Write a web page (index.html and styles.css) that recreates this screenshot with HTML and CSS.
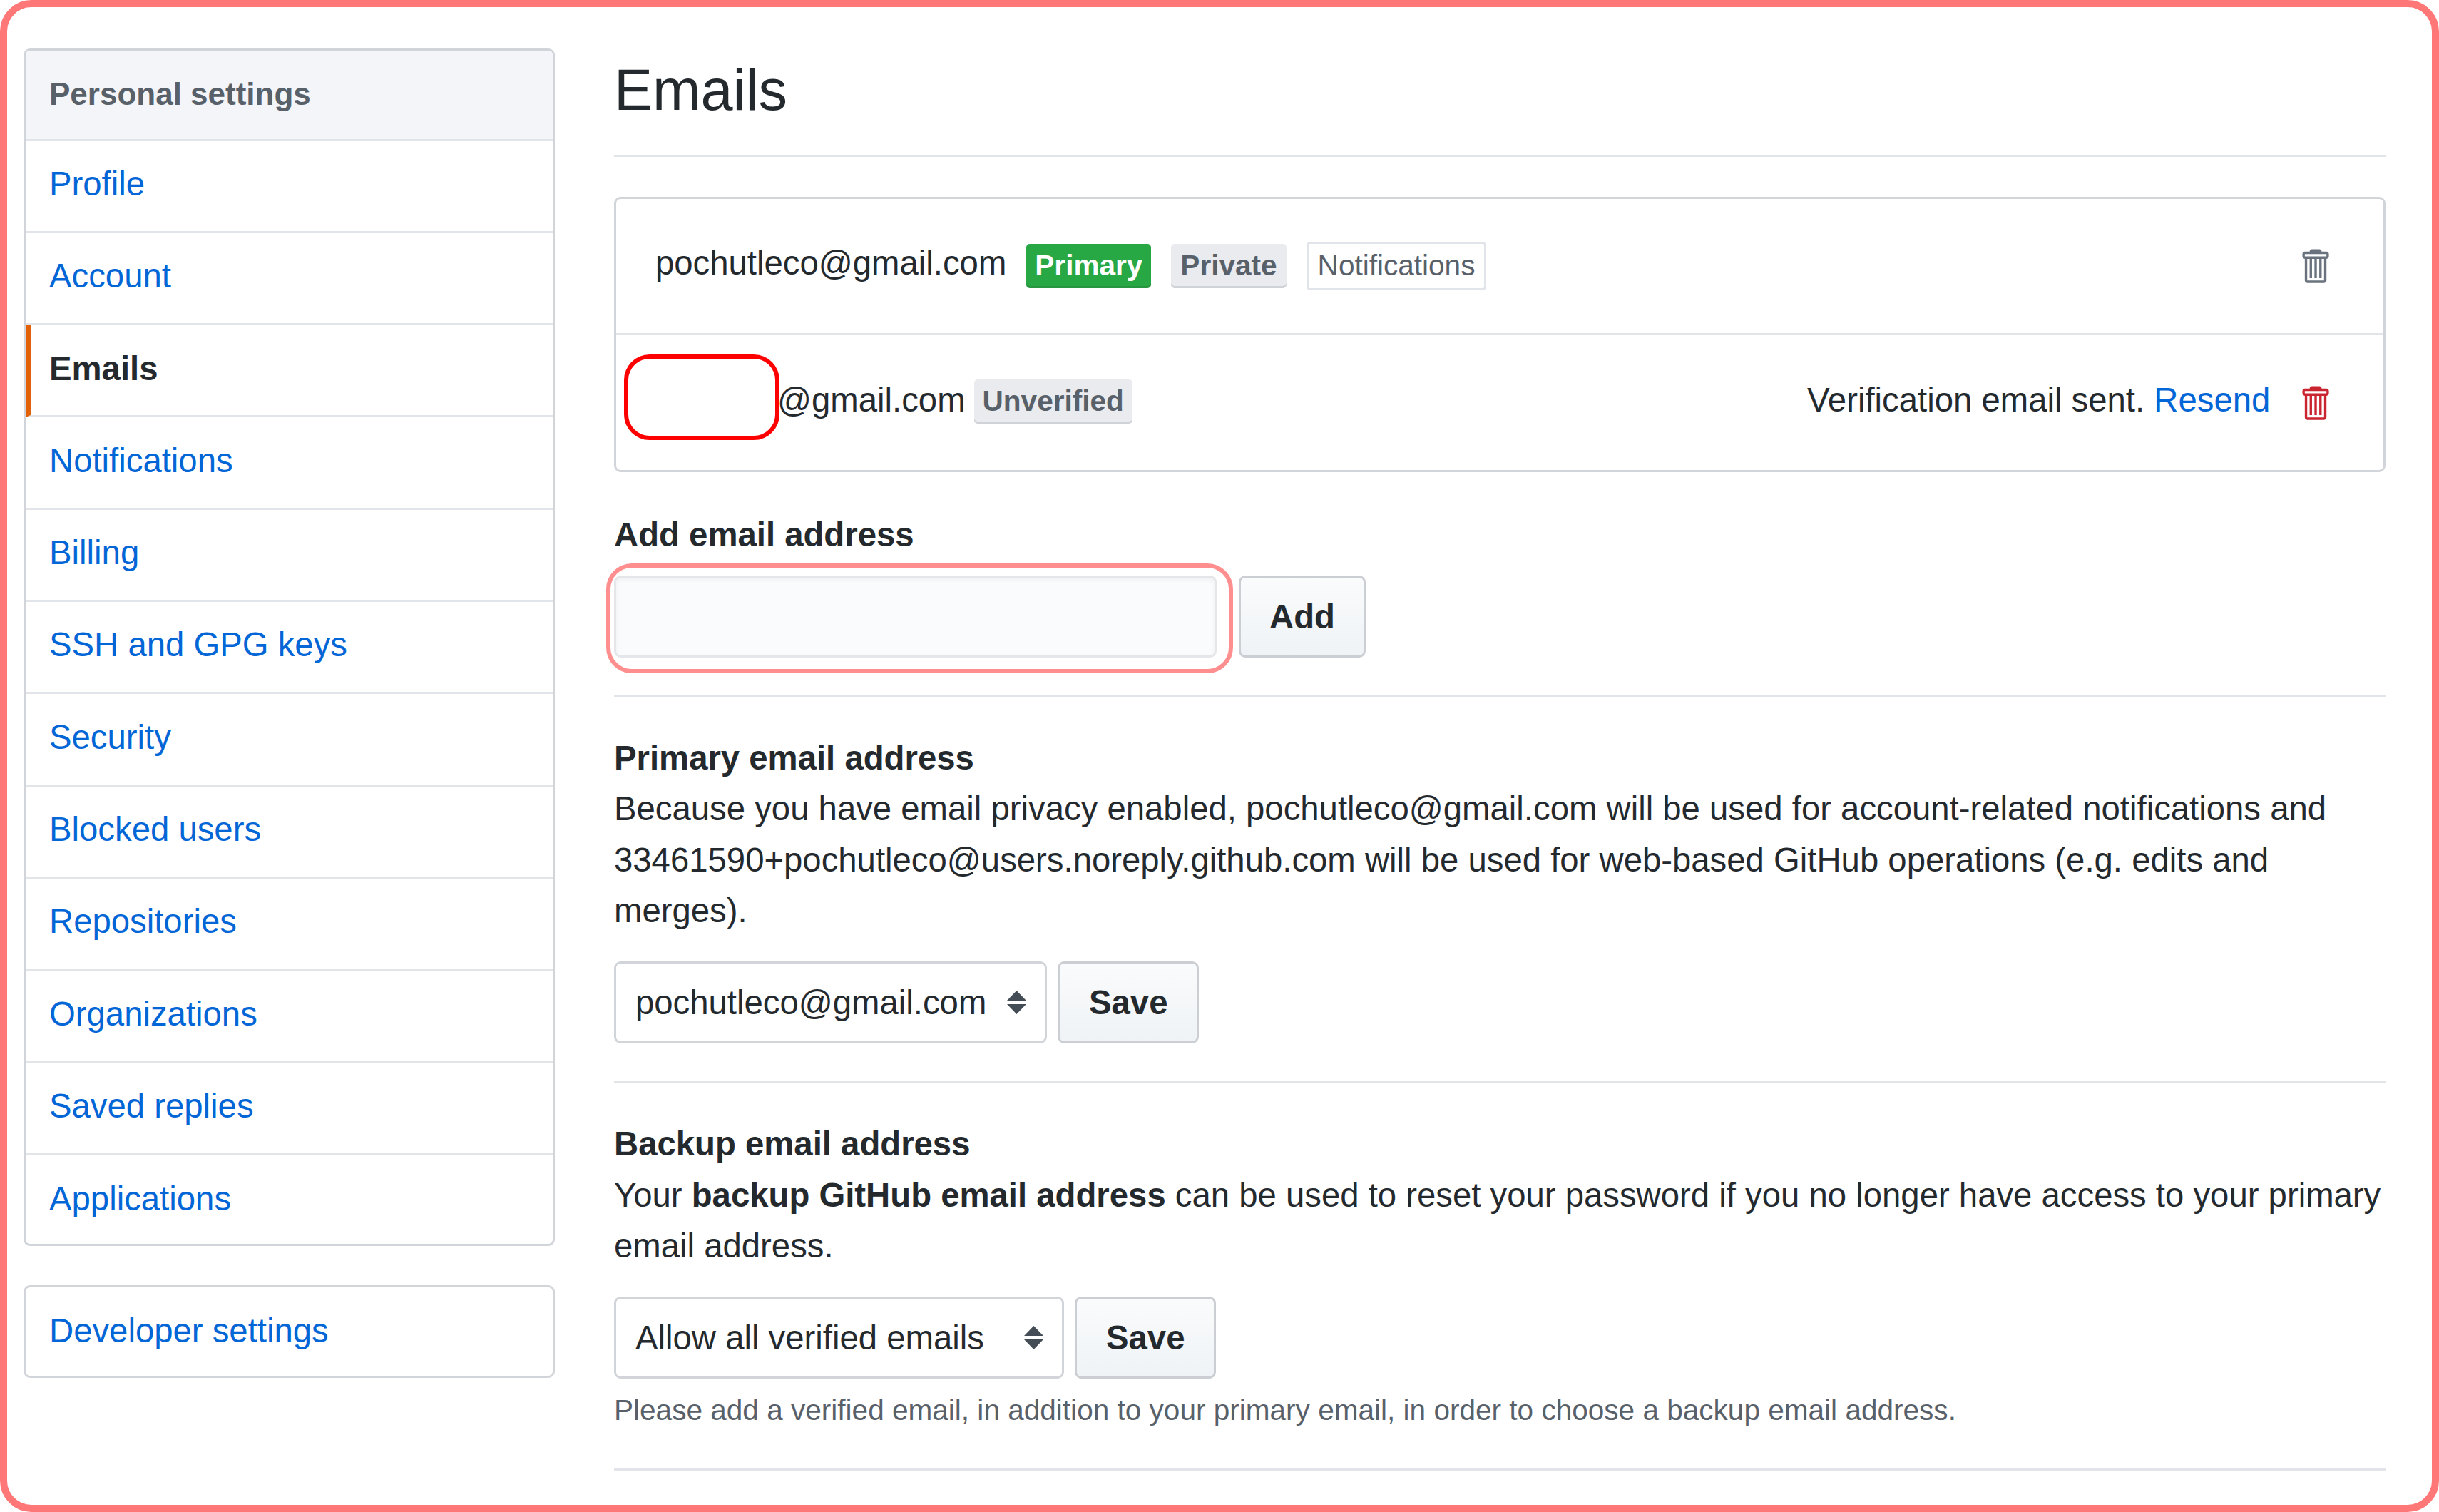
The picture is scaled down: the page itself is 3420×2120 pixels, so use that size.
FILE: index.html
```html
<!DOCTYPE html>
<html>

<head lang="en">
    <meta charset="UTF-8">
    <title>Emails</title>
    <link rel="stylesheet" href="styles.css">
</head>

<body>
    <div class="frame">
        <div class="side">
            <div class="menu">
                <div class="menu_head">Personal settings</div>
                <a class="menu_item" href="javascript:">Profile</a>
                <a class="menu_item" href="javascript:">Account</a>
                <a class="menu_item menu_current" href="javascript:">Emails</a>
                <a class="menu_item" href="javascript:">Notifications</a>
                <a class="menu_item" href="javascript:">Billing</a>
                <a class="menu_item" href="javascript:">SSH and GPG keys</a>
                <a class="menu_item" href="javascript:">Security</a>
                <a class="menu_item" href="javascript:">Blocked users</a>
                <a class="menu_item" href="javascript:">Repositories</a>
                <a class="menu_item" href="javascript:">Organizations</a>
                <a class="menu_item" href="javascript:">Saved replies</a>
                <a class="menu_item" href="javascript:">Applications</a>
            </div>
            <div class="menu menu_dev">
                <a class="menu_item" href="javascript:">Developer settings</a>
            </div>
        </div>

        <div class="main">
            <h1 class="title">Emails</h1>

            <div class="emails">
                <div class="email_row">
                    <span class="address">pochutleco@gmail.com</span>
                    <span class="label label_green">Primary</span>
                    <span class="label label_gray label_private">Private</span>
                    <span class="label label_line">Notifications</span>
                    <span class="row_right">
                        <svg class="trash" viewBox="0 0 12 16">
                            <path d="M11 2H9c0-.55-.45-1-1-1H5c-.55 0-1 .45-1 1H2c-.55 0-1 .45-1 1v1c0 .55.45 1 1 1v9c0 .55.45 1 1 1h7c.55 0 1-.45 1-1V5c.55 0 1-.45 1-1V3c0-.55-.45-1-1-1zm-1 12H3V5h1v8h1V5h1v8h1V5h1v8h1V5h1v9zm1-10H2V3h9v1z"></path>
                        </svg>
                    </span>
                </div>
                <div class="email_row email_second">
                    <span class="redact"></span>
                    <span class="address address_cut">@gmail.com</span>
                    <span class="label label_gray label_unverified">Unverified</span>
                    <span class="row_right">
                        <span class="sent">Verification email sent. <a href="javascript:">Resend</a></span>
                        <svg class="trash trash_red" viewBox="0 0 12 16">
                            <path d="M11 2H9c0-.55-.45-1-1-1H5c-.55 0-1 .45-1 1H2c-.55 0-1 .45-1 1v1c0 .55.45 1 1 1v9c0 .55.45 1 1 1h7c.55 0 1-.45 1-1V5c.55 0 1-.45 1-1V3c0-.55-.45-1-1-1zm-1 12H3V5h1v8h1V5h1v8h1V5h1v8h1V5h1v9zm1-10H2V3h9v1z"></path>
                        </svg>
                    </span>
                </div>
            </div>

            <div class="add_label">Add email address</div>
            <div class="add_row">
                <input class="add_input" type="text">
                <span class="add_mark"></span>
                <button class="btn btn_add">Add</button>
            </div>

            <div class="block block_primary">
                <div class="block_title">Primary email address</div>
                <p class="block_text">Because you have email privacy enabled, pochutleco@gmail.com will be used for account-related notifications and 33461590+pochutleco@users.noreply.github.com will be used for web-based GitHub operations (e.g. edits and merges).</p>
                <div class="pick_row">
                    <div class="pick pick_one">
                        <span>pochutleco@gmail.com</span>
                        <svg class="arrows" viewBox="0 0 27 33"><path d="M13.5 0L27 14H0zM13.5 33L0 19h27z"></path></svg>
                    </div>
                    <button class="btn">Save</button>
                </div>
            </div>

            <div class="block block_backup">
                <div class="block_title">Backup email address</div>
                <p class="block_text">Your <b>backup GitHub email address</b> can be used to reset your password if you no longer have access to your primary email address.</p>
                <div class="pick_row">
                    <div class="pick pick_two">
                        <span>Allow all verified emails</span>
                        <svg class="arrows" viewBox="0 0 27 33"><path d="M13.5 0L27 14H0zM13.5 33L0 19h27z"></path></svg>
                    </div>
                    <button class="btn">Save</button>
                </div>
                <p class="hint">Please add a verified email, in addition to your primary email, in order to choose a backup email address.</p>
            </div>
        </div>
    </div>
</body>

</html>
```

FILE: styles.css
```css
* {
    margin: 0;
    padding: 0;
    box-sizing: border-box;
}

html,
body {
    background: #fff;
}

body {
    width: 3420px;
    height: 2120px;
    overflow: hidden;
    font-family: "Liberation Sans", Arial, sans-serif;
    font-size: 47.3px;
    line-height: 71.4px;
    color: #24292e;
}

a {
    color: #0366d6;
    text-decoration: none;
}

.frame {
    width: 3420px;
    height: 2120px;
    border: 10px solid #ff7777;
    border-radius: 44px;
    padding: 58px 65px 0 23px;
    display: flex;
    gap: 83px;
}

/* left menu */
.side {
    width: 745px;
    flex-shrink: 0;
}

.menu {
    border: 3px solid #d1d5da;
    border-radius: 9px;
    overflow: hidden;
}

.menu_dev {
    margin-top: 55px;
}

.menu_head {
    height: 126.5px;
    padding: 0 0 3px 33px;
    display: flex;
    align-items: center;
    background: #f3f5f8;
    border-bottom: 3px solid #e1e4e8;
    font-size: 44px;
    font-weight: bold;
    color: #586069;
}

.menu_item {
    display: flex;
    align-items: center;
    height: 129.3px;
    padding: 0 0 6px 33px;
    border-bottom: 3px solid #e1e4e8;
}

.menu_item:last-child {
    border-bottom: 0;
    height: 124.5px;
    padding-bottom: 2px;
}

.menu_dev .menu_item {
    height: 124px;
    padding-bottom: 3px;
}

.menu_current {
    border-left: 7px solid #e36209;
    padding-left: 26px;
    font-weight: bold;
    color: #24292e;
}

/* right side */
.main {
    flex: 1;
}

.title {
    height: 151.5px;
    font-size: 81px;
    line-height: 116px;
    font-weight: normal;
    border-bottom: 3px solid #e1e4e8;
}

.emails {
    margin-top: 56.5px;
    height: 386px;
    border: 3px solid #d1d5da;
    border-radius: 9px;
}

.email_row {
    height: 188px;
    padding: 0 76px 0 55px;
    display: flex;
    align-items: center;
}

.email_second {
    height: 192px;
    padding-left: 11px;
    border-top: 3px solid #e1e4e8;
}

.address {
    margin-bottom: 8px;
}

.address_cut {
    margin-left: -3px;
}

.redact {
    width: 218px;
    height: 120px;
    flex-shrink: 0;
    margin-bottom: 16px;
    border: 6px solid #ff0000;
    border-radius: 36px;
}

.row_right {
    margin-left: auto;
    display: flex;
    align-items: center;
}

.sent {
    margin: 0 42px 8px 0;
}

.trash {
    display: block;
    width: 40.7px;
    height: 54px;
    fill: #6a737d;
}

.trash_red {
    fill: #cb2431;
}

.label {
    height: 62px;
    padding: 0 12px;
    display: flex;
    align-items: center;
    font-size: 40.56px;
    font-weight: bold;
    border-radius: 5px;
}

.label_green {
    margin-left: 28px;
    background: #28a745;
    color: #fff;
    box-shadow: inset 0 -3px 0 rgba(27, 31, 35, .12);
}

.label_gray {
    background: #e9ebef;
    color: #586069;
    box-shadow: inset 0 -3px 0 rgba(27, 31, 35, .12);
}

.label_private {
    margin-left: 28px;
    padding: 0 13px;
}

.label_unverified {
    margin: 0 0 4px 12px;
}

.label_line {
    height: 68px;
    margin-left: 28px;
    padding: 0 13px;
    font-weight: normal;
    color: #586069;
    border: 3px solid #e1e4e8;
}

.add_label {
    margin-top: 52px;
    font-weight: bold;
}

.add_row {
    margin-top: 21.6px;
    position: relative;
    display: flex;
    gap: 31px;
}

.add_input {
    width: 845px;
    height: 115px;
    background: #fafbfc;
    border: 3px solid #e4e6ea;
    border-radius: 9px;
    box-shadow: inset 0 3px 6px rgba(27, 31, 35, .05);
}

.add_mark {
    position: absolute;
    left: -11px;
    top: -17px;
    width: 879px;
    height: 154px;
    border: 6px solid #ff8f8f;
    border-radius: 36px;
}

.btn {
    height: 115px;
    padding: 0 41px;
    font-family: inherit;
    font-size: 47.3px;
    font-weight: bold;
    color: #24292e;
    background: linear-gradient(#fafbfc, #eff3f6);
    border: 3px solid #cbced2;
    border-radius: 9px;
}

.btn_add {
    padding: 0 40px;
}

.block {
    border-top: 3px solid #e1e4e8;
}

.block_primary {
    margin-top: 52px;
    padding-top: 50px;
}

.block_backup {
    margin-top: 52.5px;
    padding-top: 50px;
    height: 547px;
    border-bottom: 3px solid #e1e4e8;
}

.block_title {
    font-weight: bold;
}

.pick_row {
    margin-top: 35.3px;
    display: flex;
    gap: 15px;
}

.pick {
    height: 115px;
    padding: 0 26px 0 27px;
    display: flex;
    align-items: center;
    justify-content: space-between;
    background: #fff;
    border: 3px solid #d1d5da;
    border-radius: 9px;
}

.pick_one {
    width: 607px;
}

.pick_two {
    width: 631px;
}

.arrows {
    width: 27px;
    height: 33px;
    fill: #444d56;
}

.hint {
    margin-top: 14.5px;
    font-size: 40.56px;
    line-height: 61px;
    color: #586069;
}
```
